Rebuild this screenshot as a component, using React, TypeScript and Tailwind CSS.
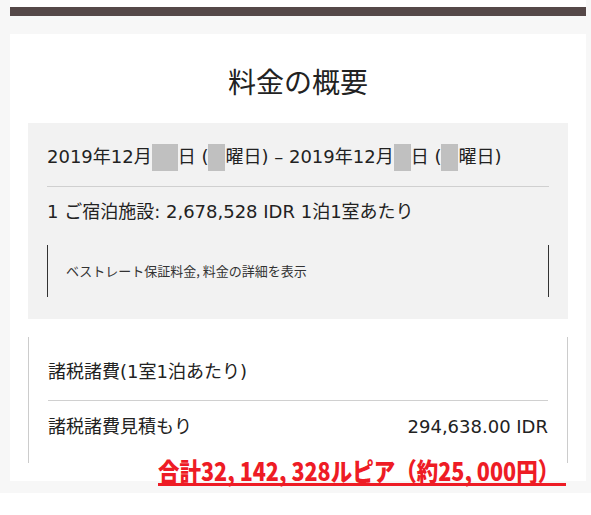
import React from "react";

const jp = { fontFamily: '"Noto Sans CJK JP", "Noto Sans", sans-serif' };
const mei = { fontFamily: '"DejaVu Sans", "Noto Sans CJK JP", sans-serif' };

function Redact({ w }: { w: string }) {
  return <span className={`inline-block h-[27px] bg-[#c0c0c0] shrink-0 ${w}`} />;
}

export default function App() {
  return (
    <div className="relative w-[591px] h-[515px] bg-white overflow-hidden text-[#222]" style={jp}>
      <div className="flex flex-col h-[493px] bg-[#f7f7f7] pl-[10px] pr-[5px]">
        <div className="h-[7px] bg-white shrink-0" />
        <div className="h-[9px] bg-[#554848] shrink-0" />
        <div className="h-[18px] shrink-0" />
        <div className="h-[447px] bg-white shrink-0 px-[18px] pt-[27px] flex flex-col">
          <h1 className="text-center text-[28px] leading-[40px] font-normal text-[#222]">料金の概要</h1>
          <div className="mt-[22px] bg-[#f2f2f2] px-[19px] pt-[22px] pb-[22px]" style={mei}>
            <div className="flex items-center h-[24px] text-[18px] leading-[24px] whitespace-nowrap">
              <span>2019年12月</span>
              <Redact w="w-[26px]" />
              <span className="whitespace-pre">日 (</span>
              <Redact w="w-[17px]" />
              <span className="whitespace-pre">曜日) – 2019年12月</span>
              <Redact w="w-[17px]" />
              <span className="whitespace-pre">日 (</span>
              <Redact w="w-[17px]" />
              <span>曜日)</span>
            </div>
            <div className="mt-[17px] h-px bg-[#d0d0d0]" />
            <div className="mt-[13px] text-[18px] leading-[24px] whitespace-nowrap">1 ご宿泊施設: 2,678,528 IDR 1泊1室あたり</div>
            <div className="mt-[21px] h-[52px] border-l border-r border-[#333] flex items-center px-[18px] text-[13px] text-[#333]" style={jp}>
              ベストレート保証料金, 料金の詳細を表示
            </div>
          </div>
          <div className="mt-[18px] border-l border-r border-[#cccccc] px-[19px] pt-[23px] pb-[24px]" style={mei}>
            <div className="text-[18px] leading-[24px]">諸税諸費(1室1泊あたり)</div>
            <div className="mt-[16px] h-px bg-[#d0d0d0]" />
            <div className="mt-[14px] flex justify-between text-[18px] leading-[24px]">
              <span>諸税諸費見積もり</span>
              <span>294,638.00 IDR</span>
            </div>
          </div>
        </div>
      </div>
      <div className="absolute left-[158px] top-[458px] w-[408px] h-[28px] border-b-[3px] border-[#ee1c25] text-[#ee1c25] whitespace-nowrap">
        <span className="inline-block origin-left scale-x-[0.86] text-[25px] leading-[25px] font-black">
          合計32, 142, 328ルピア（約25, 000円）
        </span>
      </div>
    </div>
  );
}
